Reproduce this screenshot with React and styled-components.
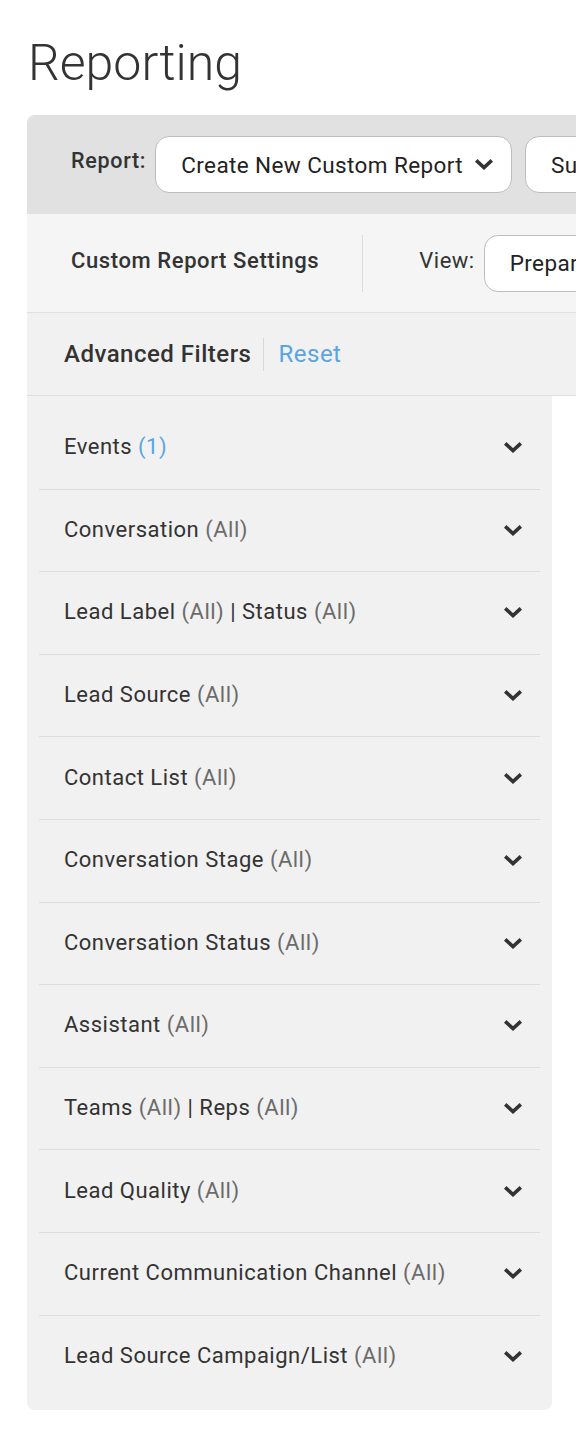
import React from 'react';
import styled, { createGlobalStyle } from 'styled-components';

const GlobalStyle = createGlobalStyle`
    html, body {
        margin: 0;
        padding: 0;
        background: #fff;
        overflow: hidden;
    }
    body {
        font-family: Roboto, "Liberation Sans", Arial, sans-serif;
        color: #333;
    }
`

const filters = [
    { parts: [['Events', '(1)']], count: true },
    { parts: [['Conversation', '(All)']] },
    { parts: [['Lead Label', '(All)'], ['Status', '(All)']] },
    { parts: [['Lead Source', '(All)']] },
    { parts: [['Contact List', '(All)']] },
    { parts: [['Conversation Stage', '(All)']] },
    { parts: [['Conversation Status', '(All)']] },
    { parts: [['Assistant', '(All)']] },
    { parts: [['Teams', '(All)'], ['Reps', '(All)']] },
    { parts: [['Lead Quality', '(All)']] },
    { parts: [['Current Communication Channel', '(All)']] },
    { parts: [['Lead Source Campaign/List', '(All)']] },
];

const Chevron = ({ size = 18 }) => (
    <svg width={size} height={size * 0.62} viewBox="0 0 18 11" fill="none">
        <polyline
            points="2.5,2.5 9,8.5 15.5,2.5"
            stroke="#333"
            strokeWidth="3.6"
            strokeLinecap="square"
            strokeLinejoin="miter"
        />
    </svg>
);

const App = () => {
    return (
        <Page>
            <GlobalStyle />
            <Title>Reporting</Title>
            <Card>
                <ReportBar>
                    <BarLabel>Report:</BarLabel>
                    <Select>
                        Create New Custom Report
                        <Chevron />
                    </Select>
                    <Select>Subscriptions</Select>
                </ReportBar>
                <SettingsBar>
                    <SettingsTitle>Custom Report Settings</SettingsTitle>
                    <VDivider />
                    <ViewLabel>View:</ViewLabel>
                    <Select>Prepared Report</Select>
                </SettingsBar>
                <FiltersHeader>
                    <FiltersTitle>Advanced Filters</FiltersTitle>
                    <SmallDivider />
                    <ResetLink>Reset</ResetLink>
                </FiltersHeader>
                <FilterPanel>
                    {filters.map((f, i) => (
                        <FilterRow key={i}>
                            <FilterText>
                                {f.parts.map(([name, val], j) => (
                                    <React.Fragment key={j}>
                                        {j > 0 && <Pipe> | </Pipe>}
                                        {name} <Paren $blue={f.count}>{val}</Paren>
                                    </React.Fragment>
                                ))}
                            </FilterText>
                            <Chevron />
                        </FilterRow>
                    ))}
                </FilterPanel>
            </Card>
        </Page>
    );
};

export default App;

const Page = styled.div`
    padding: 27px 0 40px 27px;
    width: 1400px;
`

const Title = styled.h1`
    margin: 0 0 15px 1px;
    font-family: Roboto, sans-serif;
    font-weight: 300;
    font-size: 50px;
    line-height: 73px;
    color: #333;
`

const Card = styled.div`
    width: 1100px;
`

const ReportBar = styled.div`
    display: flex;
    align-items: center;
    height: 99px;
    padding-left: 44px;
    background: #e1e1e1;
    border-radius: 8px 8px 0 0;
`

const BarLabel = styled.span`
    font-size: 21.5px;
    font-weight: 500;
    letter-spacing: 0.7px;
    color: #333;
    margin-right: 9px;
    margin-top: -8px;
`

const Select = styled.div`
    display: flex;
    align-items: center;
    gap: 12px;
    box-sizing: border-box;
    height: 57px;
    padding: 0 18px 0 25px;
    margin-right: 13px;
    background: #fff;
    border: 1px solid #bdbdbd;
    border-radius: 14px;
    font-size: 22.5px;
    letter-spacing: 0.4px;
    color: #222;
    white-space: nowrap;
`

const SettingsBar = styled.div`
    display: flex;
    align-items: center;
    height: 98px;
    padding-left: 44px;
    background: #f5f5f5;
    border-bottom: 1px solid #e0e0e0;
`

const SettingsTitle = styled.span`
    font-size: 22px;
    font-weight: 500;
    letter-spacing: 0.6px;
    color: #333;
    margin-top: -5px;
`

const VDivider = styled.div`
    width: 1px;
    height: 57px;
    background: #dcdcdc;
    margin: 0 56px 0 43px;
`

const ViewLabel = styled.span`
    font-size: 22px;
    letter-spacing: 0.5px;
    color: #333;
    margin-right: 9px;
    margin-top: -6px;
`

const FiltersHeader = styled.div`
    display: flex;
    align-items: center;
    height: 82px;
    padding-left: 37px;
    background: #f1f1f1;
    border-bottom: 1px solid #dedede;
`

const FiltersTitle = styled.span`
    font-size: 24px;
    font-weight: 500;
    letter-spacing: 0.5px;
    color: #333;
`

const SmallDivider = styled.div`
    width: 1px;
    height: 33px;
    background: #d8d8d8;
    margin: 0 14px 0 12px;
`

const ResetLink = styled.a`
    font-size: 24px;
    letter-spacing: 0.5px;
    color: #5aa5e0;
    cursor: pointer;
`

const FilterPanel = styled.div`
    width: 525px;
    box-sizing: border-box;
    padding: 11px 12px 12px;
    background: #f1f1f1;
    border-radius: 0 0 8px 8px;
`

const FilterRow = styled.div`
    display: flex;
    align-items: center;
    justify-content: space-between;
    height: 82.6px;
    box-sizing: border-box;
    padding: 0 18px 0 25px;
    border-bottom: 1px solid #dddddd;

    &:last-child {
        border-bottom: none;
    }
`

const FilterText = styled.span`
    font-size: 22px;
    letter-spacing: 0.5px;
    color: #333;
    margin-top: -2px;
`

const Paren = styled.span`
    color: ${props => (props.$blue ? '#5aa5e0' : '#6b6b6b')};
`

const Pipe = styled.span`
    color: #333;
`
